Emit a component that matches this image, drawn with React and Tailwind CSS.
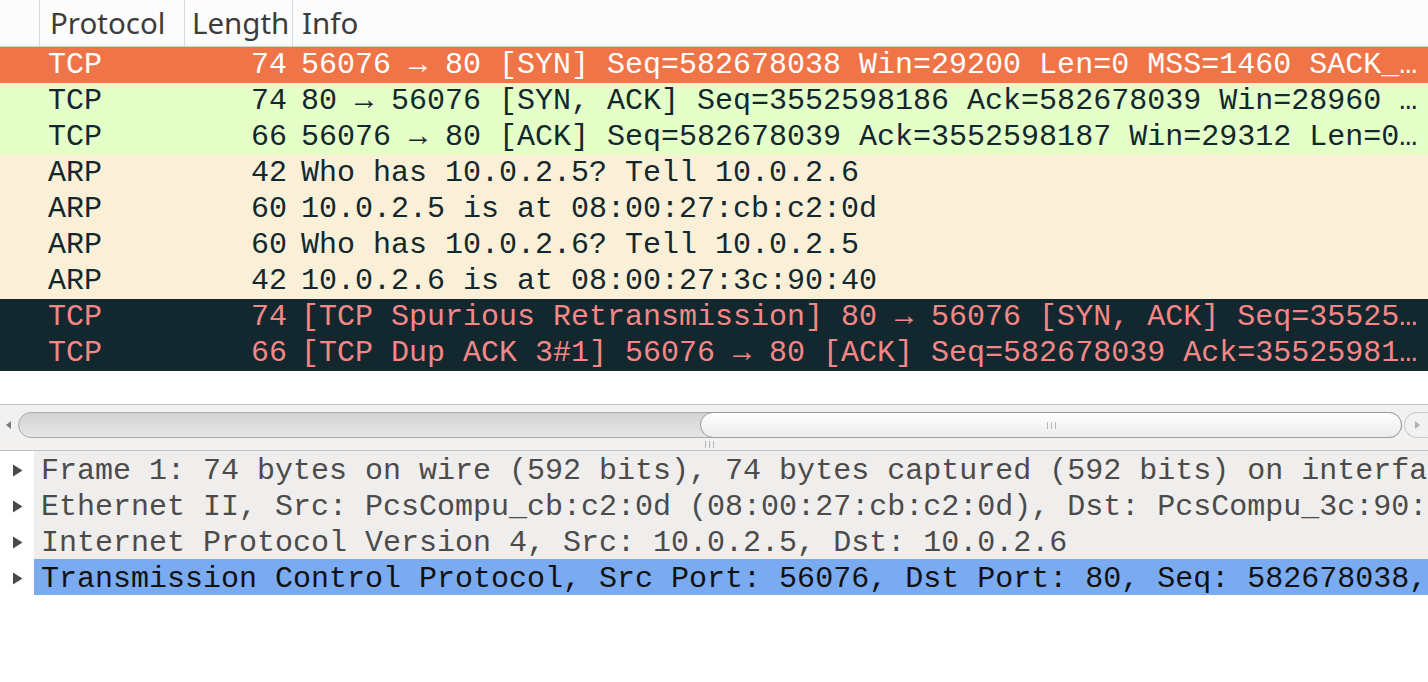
import React from 'react';

const MONO = { fontFamily: '"Liberation Mono", "DejaVu Sans Mono", monospace' };

const PACKETS = [
  { proto: 'TCP', len: 74, info: '56076 → 80 [SYN] Seq=582678038 Win=29200 Len=0 MSS=1460 SACK_…', kind: 'sel' },
  { proto: 'TCP', len: 74, info: '80 → 56076 [SYN, ACK] Seq=3552598186 Ack=582678039 Win=28960 …', kind: 'http' },
  { proto: 'TCP', len: 66, info: '56076 → 80 [ACK] Seq=582678039 Ack=3552598187 Win=29312 Len=0…', kind: 'http' },
  { proto: 'ARP', len: 42, info: 'Who has 10.0.2.5? Tell 10.0.2.6', kind: 'arp' },
  { proto: 'ARP', len: 60, info: '10.0.2.5 is at 08:00:27:cb:c2:0d', kind: 'arp' },
  { proto: 'ARP', len: 60, info: 'Who has 10.0.2.6? Tell 10.0.2.5', kind: 'arp' },
  { proto: 'ARP', len: 42, info: '10.0.2.6 is at 08:00:27:3c:90:40', kind: 'arp' },
  { proto: 'TCP', len: 74, info: '[TCP Spurious Retransmission] 80 → 56076 [SYN, ACK] Seq=35525…', kind: 'bad' },
  { proto: 'TCP', len: 66, info: '[TCP Dup ACK 3#1] 56076 → 80 [ACK] Seq=582678039 Ack=35525981…', kind: 'bad' },
];

const ROW_CLS = {
  sel: 'bg-[#ef7447] text-white',
  http: 'bg-[#e4ffc7] text-[#12272e]',
  arp: 'bg-[#faf0d7] text-[#12272e]',
  bad: 'bg-[#12272e] text-[#f78787]',
};

const TREE = [
  'Frame 1: 74 bytes on wire (592 bits), 74 bytes captured (592 bits) on interface 0',
  'Ethernet II, Src: PcsCompu_cb:c2:0d (08:00:27:cb:c2:0d), Dst: PcsCompu_3c:90:40 (08:00:27:3c:90:40)',
  'Internet Protocol Version 4, Src: 10.0.2.5, Dst: 10.0.2.6',
  'Transmission Control Protocol, Src Port: 56076, Dst Port: 80, Seq: 582678038, Len: 0',
];

function Grip() {
  return (
    <div className="flex gap-[3px]">
      <span className="w-px h-[7px] bg-[#b5b5b5]" />
      <span className="w-px h-[7px] bg-[#b5b5b5]" />
      <span className="w-px h-[7px] bg-[#b5b5b5]" />
    </div>
  );
}

export default function App() {
  return (
    <div className="w-[1428px] h-[682px] overflow-hidden bg-white flex flex-col">
      {/* packet list */}
      <div className="h-[404px] shrink-0 bg-white">
        <div
          className="flex h-[47px] border-b border-[#d2d2d2] bg-[#fcfcfc] text-[#3c3c3c] text-[29.5px] leading-none"
          style={{ fontFamily: '"Noto Sans", "Open Sans", sans-serif' }}
        >
          <div className="w-[40px] shrink-0 border-r border-[#dadada]" />
          <div className="w-[145px] shrink-0 border-r border-[#dadada] pl-[10px] flex items-center">Protocol</div>
          <div className="w-[108px] shrink-0 border-r border-[#dadada] pl-[7px] flex items-center overflow-hidden whitespace-nowrap">Length</div>
          <div className="flex-1 pl-[9px] flex items-center">Info</div>
        </div>
        {PACKETS.map((p, i) => (
          <div
            key={i}
            className={`flex h-[36px] items-center text-[30px] leading-none whitespace-nowrap ${ROW_CLS[p.kind]}`}
            style={MONO}
          >
            <div className="w-[40px] shrink-0" />
            <div className="w-[145px] shrink-0 pl-[8px]">{p.proto}</div>
            <div className="w-[108px] shrink-0 pr-[6px] text-right">{p.len}</div>
            <div className="flex-1 pl-[8px] overflow-hidden">{p.info}</div>
          </div>
        ))}
      </div>

      {/* horizontal scrollbar */}
      <div className="h-[36px] shrink-0 border-t border-[#c4c4c4] bg-[#f1f1f1] flex items-start pt-[7px]">
        <div className="w-[18px] h-[26px] flex items-center justify-center">
          <svg width="6" height="8" viewBox="0 0 6 8"><path d="M5 0 L0 4 L5 8 Z" fill="#7a7a7a" /></svg>
        </div>
        <div className="flex-1 h-[26px] rounded-full border border-[#a9a9a9] bg-gradient-to-b from-[#d3d3d3] to-[#e6e6e6] flex justify-end">
          <div className="w-[700px] h-full -my-px -mr-px rounded-full border border-[#9c9c9c] bg-gradient-to-b from-white to-[#ececec] flex items-center justify-center box-content">
            <Grip />
          </div>
        </div>
        <div className="w-[24px] h-[26px] ml-[2px] rounded-l-full border border-[#c8c8c8] border-r-0 flex items-center justify-center">
          <svg width="6" height="8" viewBox="0 0 6 8"><path d="M1 0 L6 4 L1 8 Z" fill="#b0b0b0" /></svg>
        </div>
      </div>

      {/* splitter */}
      <div className="h-[11px] shrink-0 bg-[#f2f1f0] border-b border-[#c2c2c2] pl-[705px] pt-[1px]">
        <Grip />
      </div>

      {/* detail tree */}
      <div className="flex-1 bg-white text-[30px] leading-none whitespace-nowrap" style={MONO}>
        {TREE.map((t, i) => (
          <div key={i} className="flex h-[36px]">
            <div className="w-[34px] shrink-0 flex items-center justify-center pt-[2px]">
              <svg width="11" height="13" viewBox="0 0 11 13"><path d="M1 0.5 L10.5 6.5 L1 12.5 Z" fill="#4a4a4a" /></svg>
            </div>
            <div
              className={`flex-1 pl-[7px] pt-[3px] flex items-center overflow-hidden ${
                i === 3 ? 'bg-[#7aabf0] text-[#111]' : 'bg-[#efeeed] text-[#4b4b4b]'
              }`}
            >
              {t}
            </div>
          </div>
        ))}
      </div>
    </div>
  );
}
